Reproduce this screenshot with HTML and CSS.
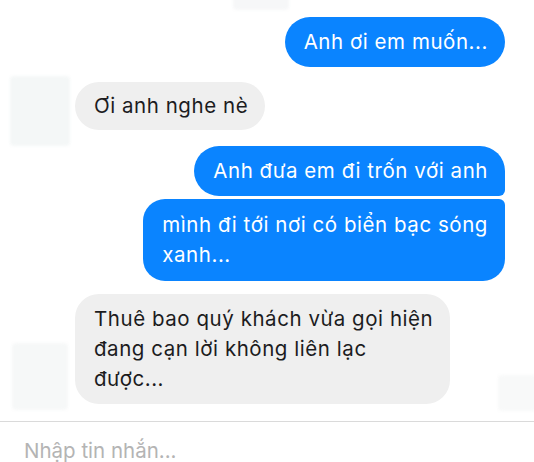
FILE: index.html
```html
<!DOCTYPE html>
<html lang="vi">
<head>
<meta charset="utf-8">
<title>Chat</title>
<link rel="stylesheet" href="styles.css">
</head>
<body>
<div class="chat">
  <div class="smudge smudge-top"></div>
  <div class="smudge smudge-avatar1"></div>
  <div class="smudge smudge-avatar2"></div>
  <div class="smudge smudge-right"></div>
  <div class="thread">
    <div class="msg out">Anh ơi em muốn...</div>
    <div class="msg in m2">Ơi anh nghe nè</div>
    <div class="group">
      <div class="msg out grp-top">Anh đưa em đi trốn với anh</div>
      <div class="msg out grp-bottom">mình đi tới nơi có biển bạc sóng<br>xanh...</div>
    </div>
    <div class="msg in m5">Thuê bao quý khách vừa gọi hiện<br>đang cạn lời không liên lạc<br>được...</div>
  </div>
  <div class="composer">Nhập tin nhắn...</div>
</div>
</body>
</html>
```

FILE: styles.css
```css
html, body {
  margin: 0;
  padding: 0;
  background: #ffffff;
}

.chat {
  position: relative;
  width: 534px;
  height: 462px;
  overflow: hidden;
  font-family: Inter, "Liberation Sans", Arial, sans-serif;
}

.smudge {
  position: absolute;
  background: #f4f7f7;
  border-radius: 4px;
  filter: blur(1.5px);
}

.smudge-top {
  left: 233px;
  top: -4px;
  width: 56px;
  height: 14px;
  background: #f6f7f8;
}

.smudge-avatar1 {
  left: 10px;
  top: 76px;
  width: 60px;
  height: 70px;
}

.smudge-avatar2 {
  left: 12px;
  top: 343px;
  width: 56px;
  height: 67px;
  background: #f6f8f8;
}

.smudge-right {
  left: 498px;
  top: 375px;
  width: 40px;
  height: 36px;
  background: #f8f9f9;
}

.thread {
  position: relative;
  display: flex;
  flex-direction: column;
  padding: 17px 29px 0 75px;
  height: 421px;
  box-sizing: border-box;
}

.msg {
  font-size: 20.5px;
  line-height: 30px;
  letter-spacing: 0.55px;
  padding: 10px 17px 10px 19px;
  border-radius: 25px;
  width: fit-content;
  white-space: nowrap;
}

.msg.out {
  align-self: flex-end;
  background: #0a84ff;
  color: #ffffff;
}

.msg.in {
  align-self: flex-start;
  background: #efefef;
  color: #1c1c1e;
}

.m2 {
  margin-top: 15px;
  padding-top: 9px;
  padding-bottom: 9px;
}

.group {
  display: flex;
  flex-direction: column;
  align-items: flex-end;
  gap: 3px;
  margin-top: 16px;
}

.grp-top {
  border-radius: 25px 25px 6px 25px;
}

.grp-bottom {
  padding-top: 11px;
  padding-bottom: 11px;
  border-radius: 22px 6px 22px 22px;
}

.m5 {
  margin-top: 13px;
  border-radius: 24px;
}

.composer {
  position: relative;
  border-top: 1px solid #dadada;
  padding: 16px 0 0 24px;
  font-size: 20.5px;
  line-height: 26px;
  color: #b4b4b4;
}
```
